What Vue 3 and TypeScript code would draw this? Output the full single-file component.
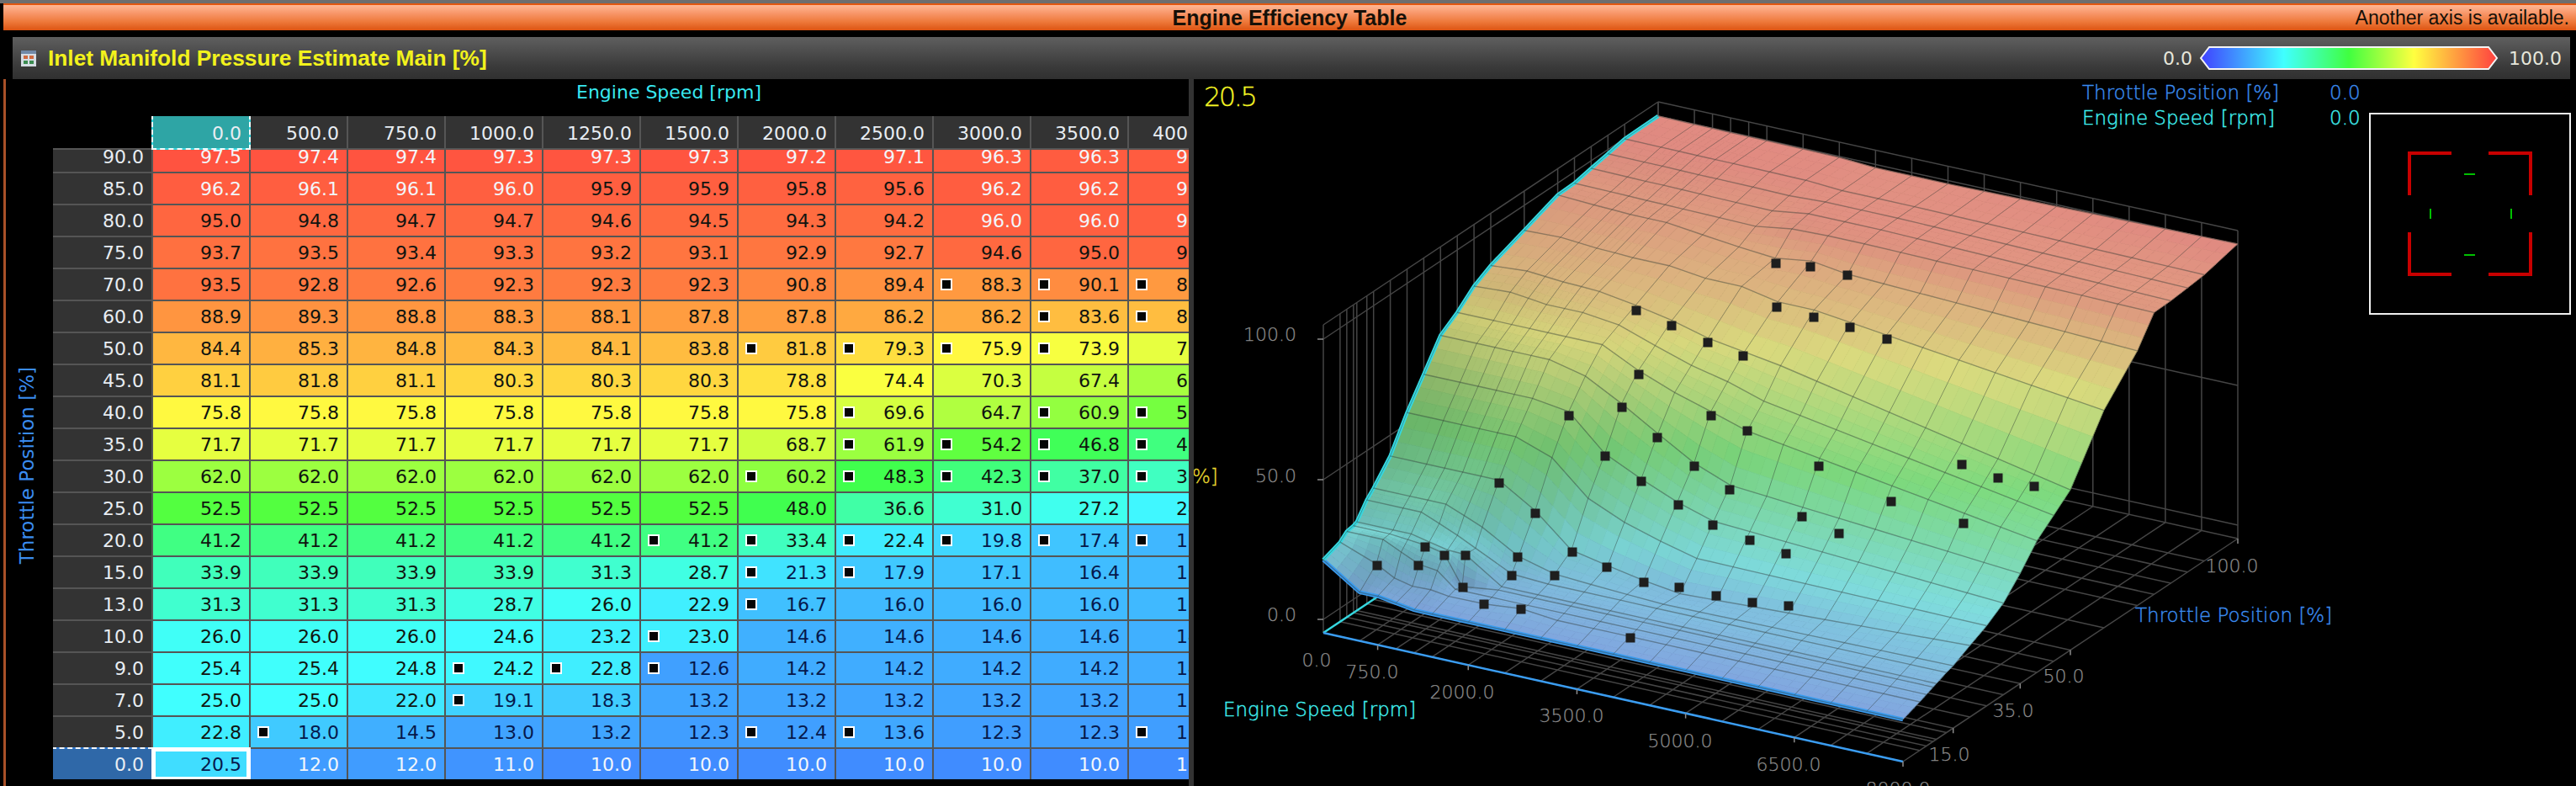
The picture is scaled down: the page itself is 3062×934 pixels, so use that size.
<script setup lang="ts">
type Row = { label: string; cells: number[]; marks: number[] };

const headers = ["0.0", "500.0", "750.0", "1000.0", "1250.0", "1500.0", "2000.0", "2500.0", "3000.0", "3500.0", "4000.0"];

const rows: Row[] = [
  { label: "90.0", cells: [97.5, 97.4, 97.4, 97.3, 97.3, 97.3, 97.2, 97.1, 96.3, 96.3, 96.3], marks: [] },
  { label: "85.0", cells: [96.2, 96.1, 96.1, 96.0, 95.9, 95.9, 95.8, 95.6, 96.2, 96.2, 96.2], marks: [] },
  { label: "80.0", cells: [95.0, 94.8, 94.7, 94.7, 94.6, 94.5, 94.3, 94.2, 96.0, 96.0, 96.0], marks: [] },
  { label: "75.0", cells: [93.7, 93.5, 93.4, 93.3, 93.2, 93.1, 92.9, 92.7, 94.6, 95.0, 95.0], marks: [] },
  { label: "70.0", cells: [93.5, 92.8, 92.6, 92.3, 92.3, 92.3, 90.8, 89.4, 88.3, 90.1, 88.3], marks: [8, 9, 10] },
  { label: "60.0", cells: [88.9, 89.3, 88.8, 88.3, 88.1, 87.8, 87.8, 86.2, 86.2, 83.6, 83.6], marks: [9, 10] },
  { label: "50.0", cells: [84.4, 85.3, 84.8, 84.3, 84.1, 83.8, 81.8, 79.3, 75.9, 73.9, 71.9], marks: [6, 7, 8, 9] },
  { label: "45.0", cells: [81.1, 81.8, 81.1, 80.3, 80.3, 80.3, 78.8, 74.4, 70.3, 67.4, 63.4], marks: [] },
  { label: "40.0", cells: [75.8, 75.8, 75.8, 75.8, 75.8, 75.8, 75.8, 69.6, 64.7, 60.9, 56.9], marks: [7, 9, 10] },
  { label: "35.0", cells: [71.7, 71.7, 71.7, 71.7, 71.7, 71.7, 68.7, 61.9, 54.2, 46.8, 41.8], marks: [7, 8, 9, 10] },
  { label: "30.0", cells: [62.0, 62.0, 62.0, 62.0, 62.0, 62.0, 60.2, 48.3, 42.3, 37.0, 33.1], marks: [6, 7, 8, 9, 10] },
  { label: "25.0", cells: [52.5, 52.5, 52.5, 52.5, 52.5, 52.5, 48.0, 36.6, 31.0, 27.2, 24.0], marks: [] },
  { label: "20.0", cells: [41.2, 41.2, 41.2, 41.2, 41.2, 41.2, 33.4, 22.4, 19.8, 17.4, 15.6], marks: [5, 6, 7, 8, 9, 10] },
  { label: "15.0", cells: [33.9, 33.9, 33.9, 33.9, 31.3, 28.7, 21.3, 17.9, 17.1, 16.4, 15.8], marks: [6, 7] },
  { label: "13.0", cells: [31.3, 31.3, 31.3, 28.7, 26.0, 22.9, 16.7, 16.0, 16.0, 16.0, 15.9], marks: [6] },
  { label: "10.0", cells: [26.0, 26.0, 26.0, 24.6, 23.2, 23.0, 14.6, 14.6, 14.6, 14.6, 14.6], marks: [5] },
  { label: "9.0", cells: [25.4, 25.4, 24.8, 24.2, 22.8, 12.6, 14.2, 14.2, 14.2, 14.2, 14.2], marks: [3, 4, 5] },
  { label: "7.0", cells: [25.0, 25.0, 22.0, 19.1, 18.3, 13.2, 13.2, 13.2, 13.2, 13.2, 13.2], marks: [3] },
  { label: "5.0", cells: [22.8, 18.0, 14.5, 13.0, 13.2, 12.3, 12.4, 13.6, 12.3, 12.3, 12.3], marks: [1, 6, 7, 10] },
  { label: "0.0", cells: [20.5, 12.0, 12.0, 11.0, 10.0, 10.0, 10.0, 10.0, 10.0, 10.0, 10.0], marks: [] }
];

const stops = [
  [0, 64, 64, 255],
  [25, 64, 255, 255],
  [50, 64, 255, 64],
  [75, 255, 255, 64],
  [100, 255, 64, 64]
];

function ramp(v: number): number[] {
  const c = Math.max(0, Math.min(99.99, v));
  const i = Math.floor(c / 25);
  const f = (c - stops[i][0]) / 25;
  return [1, 2, 3].map((k) => stops[i][k] + (stops[i + 1][k] - stops[i][k]) * f);
}

function cellColor(v: number): string {
  const [r, g, b] = ramp(v);
  return `rgb(${Math.round(r)},${Math.round(g)},${Math.round(b)})`;
}

function textColor(v: number): string {
  if (v >= 96 || v <= 12) return "#f2f6fb";
  return v < 22 ? "#06184c" : "#101410";
}

// 3D surface: projected by hand from the corners of the reference
const rpmAxis = [0, 500, 750, 1000, 1250, 1500, 2000, 2500, 3000, 3500, 4000, 4500, 5000, 5500, 6000, 6500, 7000, 7500, 8000];
const throttleAxis = [0, 5, 7, 9, 10, 13, 15, 20, 25, 30, 35, 40, 45, 50, 60, 70, 75, 80, 85, 90, 100];
const edge8000 = [9.7, 12, 13, 14, 14.5, 16, 16.8, 20, 23, 27, 33.5, 41, 46, 51, 71, 84, 93.5, 93.7, 94.3, 95, 98];

const ascending = [...rows].reverse().map((r) => r.cells);
ascending.push(rows[0].cells.map((c) => c + 0.2));

const grid: number[][] = ascending.map((cells, i) => {
  const out = [...cells];
  for (let k = 11; k < rpmAxis.length; k++) {
    const f = (rpmAxis[k] - 4000) / 4000;
    out.push(cells[10] + (edge8000[i] - cells[10]) * f);
  }
  return out;
});

function project(r: number, t: number, v: number): [number, number] {
  return [1573 + 689 * r + 398 * t, 752 + 153 * r - 265 * t - 3.4 * (v + 5)];
}

function wall(r: number, t: number, h: number): [number, number] {
  return [1573 + 689 * r + 398 * t, 752 + 153 * r - 265 * t - h];
}

const fmt = (p: [number, number]) => `${p[0].toFixed(1)},${p[1].toFixed(1)}`;

const shade: number[][] = grid.map((cells, i) =>
  cells.map((v, j) => {
    const i0 = Math.max(0, i - 1);
    const i1 = Math.min(grid.length - 1, i + 1);
    const j0 = Math.max(0, j - 1);
    const j1 = Math.min(cells.length - 1, j + 1);
    const dt = (grid[i1][j] - grid[i0][j]) / ((throttleAxis[i1] - throttleAxis[i0]) / 100);
    const dr = (cells[j1] - cells[j0]) / ((rpmAxis[j1] - rpmAxis[j0]) / 8000);
    // darker only towards the steep left side, the middle stays bright
    const leftness = Math.pow(1 - rpmAxis[j] / 8000, 4);
    return Math.max(0.82, 1.02 - (0.0002 + 0.0009 * leftness) * Math.abs(dt) - 0.0002 * Math.abs(dr));
  })
);

function lerp2(a: number[][], i: number, j: number, u: number, w: number): number {
  return (
    a[i][j] * (1 - u) * (1 - w) + a[i][j + 1] * u * (1 - w) + a[i + 1][j] * (1 - u) * w + a[i + 1][j + 1] * u * w
  );
}

const polys: Array<{ points: string; fill: string }> = [];
const SUB = 3;

for (let i = throttleAxis.length - 2; i >= 0; i--) {
  for (let j = 0; j < rpmAxis.length - 1; j++) {
    for (let sw = SUB - 1; sw >= 0; sw--) {
      for (let su = 0; su < SUB; su++) {
        const corner = (a: number, b: number) => {
          const u = a / SUB;
          const w = b / SUB;
          const r = (rpmAxis[j] + (rpmAxis[j + 1] - rpmAxis[j]) * u) / 8000;
          const t = (throttleAxis[i] + (throttleAxis[i + 1] - throttleAxis[i]) * w) / 100;
          return project(r, t, lerp2(grid, i, j, u, w));
        };
        const um = (su + 0.5) / SUB;
        const wm = (sw + 0.5) / SUB;
        const base = ramp(lerp2(grid, i, j, um, wm));
        const s = lerp2(shade, i, j, um, wm);
        const [cr, cg, cb] = base.map((c) => Math.min(255, Math.round((c * 0.49 + 96) * s)));
        polys.push({
          points: [corner(su, sw), corner(su + 1, sw), corner(su + 1, sw + 1), corner(su, sw + 1)].map(fmt).join(" "),
          fill: `rgb(${cr},${cg},${cb})`
        });
      }
    }
  }
}

const rowLines = grid.map((cells, i) =>
  cells.map((v, j) => fmt(project(rpmAxis[j] / 8000, throttleAxis[i] / 100, v))).join(" ")
);
const colLines = rpmAxis.map((rpm, j) =>
  grid.map((cells, i) => fmt(project(rpm / 8000, throttleAxis[i] / 100, cells[j]))).join(" ")
);

const segment = (a: [number, number], b: [number, number]) => ({ x1: a[0], y1: a[1], x2: b[0], y2: b[1] });

const floorLines = [
  ...throttleAxis.map((t) => segment(wall(0, t / 100, 0), wall(1, t / 100, 0))),
  ...rpmAxis.map((r) => segment(wall(r / 8000, 0, 0), wall(r / 8000, 1, 0)))
];

const levels = [16, 182, 349, 366];
const wallLines = [
  ...throttleAxis.map((t) => segment(wall(0, t / 100, 0), wall(0, t / 100, 366))),
  ...rpmAxis.map((r) => segment(wall(r / 8000, 1, 0), wall(r / 8000, 1, 366))),
  ...levels.map((h) => segment(wall(0, 0, h), wall(0, 1, h))),
  ...levels.map((h) => segment(wall(0, 1, h), wall(1, 1, h)))
];

const rpmTicks = [750, 2000, 3500, 5000, 6500, 8000].map((r) => {
  const p = wall(r / 8000, 0, 0);
  return segment(p, [p[0], p[1] + 6]);
});
const throttleTicks = [15, 35, 50, 100].map((t) => {
  const p = wall(1, t / 100, 0);
  return segment(p, [p[0], p[1] + 6]);
});

const rpmLabels = [
  { text: "0.0", x: 1565, y: 792 },
  { text: "750.0", x: 1631, y: 806 },
  { text: "2000.0", x: 1738, y: 830 },
  { text: "3500.0", x: 1868, y: 858 },
  { text: "5000.0", x: 1997, y: 888 },
  { text: "6500.0", x: 2126, y: 916 },
  { text: "8000.0", x: 2256, y: 945 }
];
const throttleLabels = [
  { text: "15.0", x: 2317, y: 904 },
  { text: "35.0", x: 2393, y: 852 },
  { text: "50.0", x: 2453, y: 811 },
  { text: "100.0", x: 2653, y: 680 }
];
const valueLabels = [
  { text: "100.0", y: 405 },
  { text: "50.0", y: 573 },
  { text: "0.0", y: 738 }
];

const nodes: Array<[number, number]> = [
  [2111, 313], [2152, 317], [2196, 327], [1945, 369], [1987, 387], [2030, 407], [2072, 423],
  [2112, 365], [2156, 377], [2199, 389], [2243, 403], [1948, 445], [1928, 484], [1865, 494],
  [2034, 494], [2077, 512], [1970, 520], [1908, 542], [2014, 554], [2162, 554], [2332, 552],
  [2375, 568], [2418, 578], [1782, 574], [1951, 572], [2056, 582], [2248, 596], [2334, 622],
  [1995, 600], [2142, 614], [1825, 610], [2036, 624], [2186, 634], [2080, 642], [2123, 658],
  [1869, 656], [1804, 662], [1694, 650], [1717, 660], [1742, 660], [1637, 672], [1686, 672],
  [1910, 674], [1797, 684], [1848, 684], [1954, 692], [1996, 698], [2040, 708], [2083, 716],
  [2126, 720], [1739, 698], [1764, 718], [1808, 724], [1938, 758]
];
</script>

<template>
  <div class="window">
    <div class="strip"></div>
    <div class="title-bar">
      <span class="title">Engine Efficiency Table</span>
      <span class="hint">Another axis is available.</span>
    </div>

    <div class="head-wrap">
      <div class="panel-head">
        <svg class="head-icon" viewBox="0 0 18 19" width="18" height="19">
          <rect x="0" y="0" width="18" height="19" fill="#d5dce4" />
          <rect x="0" y="0" width="18" height="4" fill="#7189a8" />
          <rect x="3" y="6" width="5" height="4" fill="#cf6a40" />
          <rect x="10" y="6" width="5" height="4" fill="#cf6a40" />
          <rect x="3" y="12" width="5" height="4" fill="#3c8c52" />
          <rect x="10" y="12" width="5" height="4" fill="#3c8c52" />
        </svg>
        <span class="head-text">Inlet Manifold Pressure Estimate Main [%]</span>
        <div class="legend">
          <span>0.0</span>
          <svg viewBox="0 0 356 28" width="356" height="28">
            <defs>
              <linearGradient id="ramp" x1="0" x2="1" y1="0" y2="0">
                <stop offset="0" stop-color="#4040ff" />
                <stop offset="0.28" stop-color="#40ffff" />
                <stop offset="0.5" stop-color="#40ff40" />
                <stop offset="0.72" stop-color="#ffff40" />
                <stop offset="1" stop-color="#ff4040" />
              </linearGradient>
            </defs>
            <polygon points="2,14 12,1 344,1 354,14 344,27 12,27" fill="url(#ramp)" stroke="#f4f4f4" stroke-width="2" />
          </svg>
          <span class="legend-max">100.0</span>
        </div>
      </div>
    </div>

    <div class="body">
      <section class="table-side">
        <div class="y-axis"><span>Throttle Position [%]</span></div>
        <div class="table-col">
          <div class="x-axis">Engine Speed [rpm]</div>
          <div class="table-clip">
            <div class="table-grid">
              <div class="corner"></div>
              <div
                v-for="(h, i) in headers"
                :key="h"
                class="cell head"
                :class="{ 'head-active': i === 0 }"
              >
                {{ h }}
              </div>
              <template v-for="(row, r) in rows" :key="row.label">
                <div class="cell head" :class="{ 'row-active': r === rows.length - 1 }">{{ row.label }}</div>
                <div
                  v-for="(v, c) in row.cells"
                  :key="c"
                  class="cell"
                  :class="{ 'cell-active': r === rows.length - 1 && c === 0 }"
                  :style="{ background: cellColor(v), color: textColor(v) }"
                >
                  <i v-if="row.marks.includes(c)" class="mark"></i>
                  {{ v.toFixed(1) }}
                </div>
              </template>
            </div>
          </div>
        </div>
      </section>

      <div class="splitter"></div>

      <section class="plot-side">
        <svg class="plot" viewBox="1419 94 1643 840" width="1643" height="840">
          <text x="1431" y="126" class="readout">20.5</text>
          <text x="2475" y="118" class="info blue">Throttle Position [%]</text>
          <text x="2769" y="118" class="info blue">0.0</text>
          <text x="2475" y="148" class="info cyan">Engine Speed [rpm]</text>
          <text x="2769" y="148" class="info cyan">0.0</text>
          <text x="1408" y="574" class="info yellow">[%]</text>

          <g class="grid-line">
            <line v-for="(l, i) in wallLines" :key="`w${i}`" v-bind="l" />
            <line v-for="(l, i) in floorLines" :key="`f${i}`" v-bind="l" />
          </g>
          <line x1="1573" y1="752" x2="1971" y2="487" stroke="#35d8e0" stroke-width="2.5" />
          <line x1="1573" y1="752" x2="2262" y2="905" stroke="#3a9cf0" stroke-width="2.5" />

          <g class="tick-line">
            <line v-for="(l, i) in rpmTicks" :key="`rt${i}`" v-bind="l" />
            <line v-for="(l, i) in throttleTicks" :key="`tt${i}`" v-bind="l" />
            <line x1="1566" y1="736" x2="1573" y2="736" />
            <line x1="1566" y1="570" x2="1573" y2="570" />
            <line x1="1566" y1="403" x2="1573" y2="403" />
          </g>

          <polygon
            v-for="(p, i) in polys"
            :key="i"
            :points="p.points"
            :fill="p.fill"
            :stroke="p.fill"
            stroke-width="0.8"
          />
          <polyline :points="rowLines[0]" class="rim" stroke="#3a9cf0" />
          <polyline :points="colLines[0]" class="rim" stroke="#35d8e0" />
          <g class="mesh">
            <polyline v-for="(l, i) in rowLines" :key="`mr${i}`" :points="l" stroke-width="1.4" />
            <polyline v-for="(l, i) in colLines" :key="`mc${i}`" :points="l" stroke-width="1" />
          </g>
          <rect
            v-for="(n, i) in nodes"
            :key="`n${i}`"
            :x="n[0] - 5.5"
            :y="n[1] - 5.5"
            width="11"
            height="11"
            fill="#1e1e1e"
          />

          <text v-for="l in rpmLabels" :key="l.text" :x="l.x" :y="l.y" class="tick-label" text-anchor="middle">{{ l.text }}</text>
          <text v-for="l in throttleLabels" :key="l.text" :x="l.x" :y="l.y" class="tick-label" text-anchor="middle">{{ l.text }}</text>
          <text v-for="l in valueLabels" :key="l.text" x="1541" :y="l.y" class="tick-label" text-anchor="end">{{ l.text }}</text>
          <text x="1454" y="851" class="info cyan">Engine Speed [rpm]</text>
          <text x="2538" y="739" class="info blue">Throttle Position [%]</text>

          <rect x="2817" y="135" width="238" height="238" fill="#000" stroke="#f0f0f0" stroke-width="2" />
          <path
            d="M2864 232V182H2914M2958 182H3008V232M2864 276V326H2914M2958 326H3008V276"
            fill="none"
            stroke="#c80000"
            stroke-width="4"
          />
          <path d="M2929 207H2942M2929 303H2942M2889 248V260M2985 248V260" fill="none" stroke="#00c000" stroke-width="2" />
        </svg>
      </section>
    </div>
  </div>
</template>

<style scoped>
.window {
  width: 3062px;
  height: 934px;
  background: #000;
  overflow: hidden;
  display: flex;
  flex-direction: column;
}

.strip {
  height: 4px;
  background: #6e6e6e;
}

.title-bar {
  height: 32px;
  border-top: 2px solid #e2570f;
  box-sizing: border-box;
  background: linear-gradient(#ffb795, #f79466 35%, #ee7a3c 65%, #dd5412);
  position: relative;
  display: flex;
  justify-content: center;
  align-items: center;
  margin-left: 4px;
  font-family: "Liberation Sans", sans-serif;
  color: #161008;
}

.title {
  font-size: 25px;
  font-weight: 700;
}

.hint {
  position: absolute;
  right: 8px;
  top: 1px;
  font-size: 23px;
  line-height: 28px;
}

.head-wrap {
  padding: 8px 7px 0 15px;
}

.panel-head {
  height: 50px;
  background: linear-gradient(#5f5f5f, #3a3a3a 70%, #303030);
  display: flex;
  align-items: center;
  padding-left: 10px;
  font-family: "Liberation Sans", sans-serif;
}

.head-icon {
  margin-right: 14px;
}

.head-text {
  color: #f2f21c;
  font-size: 26.3px;
  font-weight: 700;
}

.legend {
  margin-left: auto;
  display: flex;
  align-items: center;
  gap: 8px;
  padding-right: 10px;
  color: #e6e6da;
  font-family: "DejaVu Sans", sans-serif;
  font-size: 22px;
}

.legend-max {
  margin-left: 4px;
}

.body {
  flex: 1;
  display: flex;
  min-height: 0;
  border-left: 3px solid #a85028;
  margin-left: 4px;
}

.table-side {
  width: 1406px;
  display: flex;
  overflow: hidden;
}

.y-axis {
  width: 56px;
  display: flex;
  align-items: center;
  justify-content: center;
  padding-top: 78px;
  box-sizing: border-box;
  color: #3a8cf0;
  font-family: "DejaVu Sans", sans-serif;
  font-size: 23px;
}

.y-axis span {
  writing-mode: vertical-rl;
  transform: rotate(180deg);
  white-space: nowrap;
  margin-left: -6px;
}

.table-col {
  flex: 1;
  min-width: 0;
  font-family: "DejaVu Sans", sans-serif;
  font-size: 22px;
}

.x-axis {
  height: 44px;
  text-align: center;
  line-height: 32px;
  color: #38e8f0;
  padding-left: 114px;
}

.table-clip {
  overflow: hidden;
}

.table-grid {
  display: grid;
  grid-template-columns: 117px repeat(11, 114px);
  grid-template-rows: 38px 26px repeat(19, 36px);
  gap: 2px;
  width: 1393px;
  background: linear-gradient(#000 0 0) 0 0 / 117px 38px no-repeat, #555;
}

.corner {
  background: #000;
}

.cell {
  position: relative;
  display: flex;
  align-items: flex-end;
  justify-content: flex-end;
  padding-right: 9px;
  overflow: hidden;
  line-height: 34px;
  white-space: nowrap;
}

.head {
  background: #333;
  color: #e8edf2;
}

.head-active {
  background: #2ea5a5;
  outline: 2px dashed #f0ffff;
  box-shadow: 0 0 0 2px #35d8e0;
  z-index: 1;
  overflow: visible;
}

.row-active {
  background: #2f68a8;
  outline: 2px dashed #f4f8ff;
  box-shadow: 0 0 0 2px #2f78d0;
  z-index: 1;
  overflow: visible;
}

.cell-active {
  box-shadow: inset 0 0 0 3px #fff, 0 0 0 2px #fff;
  z-index: 1;
}

.mark {
  position: absolute;
  left: 8px;
  top: 11px;
  width: 10px;
  height: 10px;
  background: #050505;
  border: 2px solid #fff;
}

.splitter {
  width: 6px;
  background: #333;
}

.plot-side {
  flex: 1;
  min-width: 0;
  overflow: hidden;
}

.plot {
  display: block;
}

.readout {
  fill: #f4f424;
  stroke: #f4f424;
  stroke-width: 0.3;
  font-family: "DejaVu Sans", sans-serif;
  font-weight: 200;
  font-size: 32px;
  letter-spacing: -2.5px;
}

.info {
  font-family: "DejaVu Sans", sans-serif;
  font-weight: 200;
  font-size: 23px;
  stroke-width: 0.4;
}

.blue {
  fill: #3b8cf0;
  stroke: #3b8cf0;
}

.cyan {
  fill: #40f0f0;
  stroke: #40f0f0;
}

.yellow {
  fill: #e8d830;
  stroke: #e8d830;
}

.tick-label {
  fill: #8c8c8c;
  stroke: #8c8c8c;
  stroke-width: 0.25;
  font-family: "DejaVu Sans", sans-serif;
  font-weight: 200;
  font-size: 22px;
}

.grid-line line {
  stroke: #454545;
  stroke-width: 1.5;
}

.tick-line line {
  stroke: #8c8c8c;
  stroke-width: 1.5;
}

.rim {
  fill: none;
  stroke-width: 4.5;
}

.mesh polyline {
  fill: none;
  stroke: rgba(50, 60, 55, 0.42);
}
</style>

<style>
html,
body {
  background: #000;
}
</style>
